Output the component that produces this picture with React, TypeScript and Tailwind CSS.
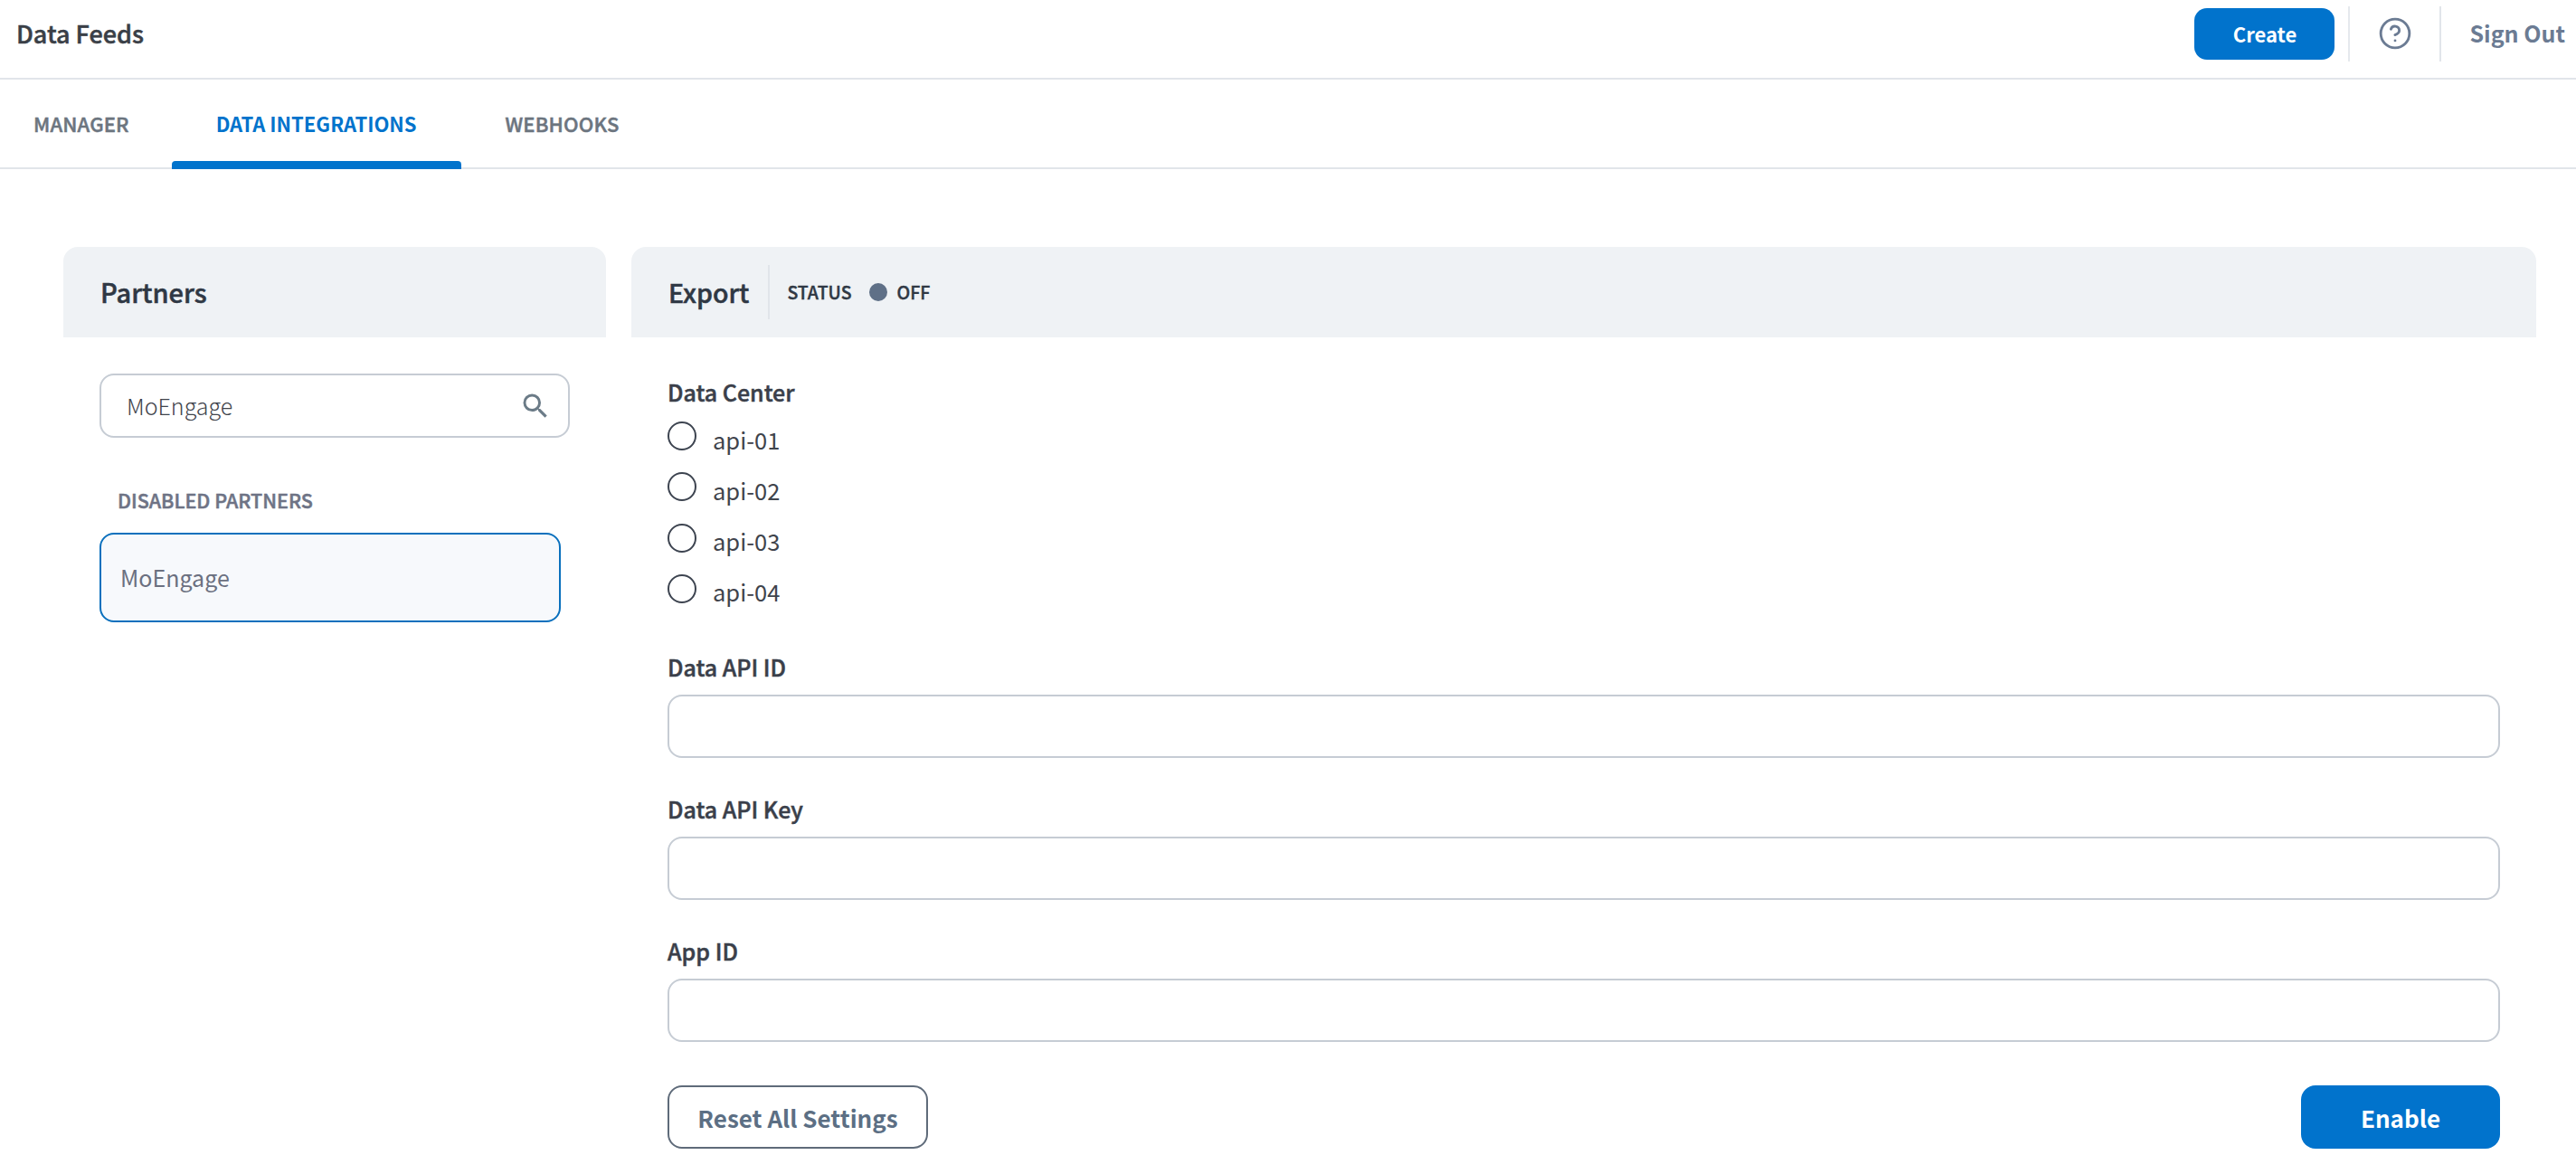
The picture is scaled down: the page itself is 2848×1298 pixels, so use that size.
import React from 'react';
import { CircleHelp } from 'lucide-react';
import { MdSearch } from 'react-icons/md';

const tabs = ['MANAGER', 'DATA INTEGRATIONS', 'WEBHOOKS'];
const centers = ['api-01', 'api-02', 'api-03', 'api-04'];
const fields = ['Data API ID', 'Data API Key', 'App ID'];

const Field: React.FC<{ label: string }> = ({ label }) => (
	<div className="mt-[38px]">
		<div className="h-[36px] mb-[13px] text-[25px] leading-[36px] font-medium [-webkit-text-stroke:0.5px_currentColor] text-[#3a3f4a]">{label}</div>
		<input className="block w-full h-[70px] rounded-[16px] border-2 border-[#c6ccd4] bg-white" />
	</div>
);

const App: React.FC = () => {
	return (
		<div className="w-[2848px] h-[1298px] overflow-hidden bg-white font-['Noto_Sans_CJK_JP',sans-serif]">
			{/* top bar */}
			<header className="h-[88px] flex items-center border-b-2 border-[#e1e5ea] pl-[18px] pr-[12px] pb-[12px]">
				<h1 className="text-[27px] font-medium [-webkit-text-stroke:0.5px_currentColor] text-[#3a3f47]">Data Feeds</h1>
				<div className="ml-auto flex items-center h-full">
					<button className="w-[155px] h-[57px] rounded-[14px] bg-[#0173cc] text-white text-[22px] font-bold">Create</button>
					<div className="ml-[15px] w-[2px] h-[61px] bg-[#e6e9ed]" />
					<div className="w-[99px] flex justify-center">
						<CircleHelp size={38} strokeWidth={1.8} className="text-[#6b7b93]" />
					</div>
					<div className="w-[2px] h-[61px] bg-[#e1e5ea]" />
					<span className="ml-[31px] text-[25px] font-bold text-[#6b7b93]">Sign Out</span>
				</div>
			</header>

			{/* tabs */}
			<nav className="h-[99px] flex border-b-2 border-[#e1e5ea] pl-[37px]">
				{tabs.map((t, i) => (
					<div
						key={t}
						className={`relative flex items-center text-[22px] ${i === 0 ? 'pr-[47px]' : 'px-[49px]'} ${i === 1 ? 'font-bold text-[#0173cc]' : 'font-medium tracking-[0.15px] [-webkit-text-stroke:0.5px_currentColor] text-[#6c757f]'}`}
					>
						{t}
						{i === 1 && <div className="absolute left-0 right-0 bottom-[-2px] h-[9px] rounded-t-[4px] bg-[#0173cc]" />}
					</div>
				))}
			</nav>

			<main className="flex gap-[28px] pt-[86px] pl-[70px] pr-[44px]">
				{/* partners */}
				<section className="w-[600px] shrink-0">
					<div className="h-[100px] flex items-center pl-[41px] rounded-t-[16px] bg-[#eff2f5] text-[29px] font-medium [-webkit-text-stroke:0.5px_currentColor] text-[#2f3844]">Partners</div>
					<div className="pt-[40px] pl-[40px]">
						<div className="w-[520px] h-[71px] flex items-center rounded-[16px] border-2 border-[#c6ccd4] pl-[28px] pr-[18px]">
							<span className="text-[25px] font-light text-[#3f444c]">MoEngage</span>
							<MdSearch size={36} className="ml-auto text-[#6b7b87]" />
						</div>
						<div className="mt-[53px] ml-[20px] text-[21.5px] leading-[32px] font-medium [-webkit-text-stroke:0.5px_currentColor] text-[#6e7385]">DISABLED PARTNERS</div>
						<div className="mt-[20px] w-[510px] h-[99px] flex items-center rounded-[16px] border-2 border-[#0a70bd] bg-[#f7f9fc] pl-[21px] text-[25px] text-[#6b7080]">MoEngage</div>
					</div>
				</section>

				{/* export settings */}
				<section className="flex-1">
					<div className="h-[100px] flex items-center pl-[41px] rounded-t-[16px] bg-[#eff2f5]">
						<span className="text-[28.5px] font-medium [-webkit-text-stroke:0.5px_currentColor] text-[#2f3844]">Export</span>
						<div className="ml-[21px] w-[2px] h-[60px] bg-[#e1e5ea]" />
						<span className="ml-[19px] text-[19.5px] font-medium [-webkit-text-stroke:0.4px_currentColor] text-[#2f3844]">STATUS</span>
						<div className="ml-[19px] w-[20px] h-[20px] rounded-full bg-[#5f7087]" />
						<span className="ml-[11px] text-[19.5px] font-medium [-webkit-text-stroke:0.4px_currentColor] text-[#2f3844]">OFF</span>
					</div>
					<div className="pt-[42px] pl-[40px] pr-[40px]">
						<div className="text-[25px] leading-[36px] font-medium [-webkit-text-stroke:0.5px_currentColor] text-[#3a3f4a] mb-[3px]">Data Center</div>
						<div className="mb-[40px]">
							{centers.map((c) => (
								<label key={c} className="h-[56.3px] flex items-center">
									<span className="w-[32px] h-[32px] rounded-full border-2 border-[#3d4450]" />
									<span className="ml-[18px] pt-[7px] text-[25.5px] text-[#3f444c]">{c}</span>
								</label>
							))}
						</div>
						{fields.map((f) => (
							<Field key={f} label={f} />
						))}
						<div className="mt-[48px] flex justify-between">
							<button className="w-[288px] h-[70px] rounded-[16px] border-2 border-[#5f6b7a] text-[26px] font-semibold text-[#5c6f84]">Reset All Settings</button>
							<button className="w-[220px] h-[70px] rounded-[16px] bg-[#0173cc] text-[26px] font-bold text-white">Enable</button>
						</div>
					</div>
				</section>
			</main>
		</div>
	);
};

export default App;
